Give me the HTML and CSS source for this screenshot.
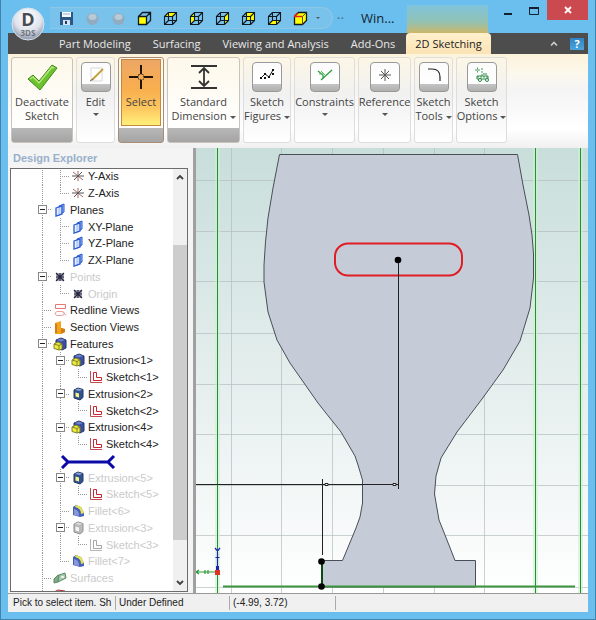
FILE: index.html
```html
<!DOCTYPE html>
<html lang="en">
<head>
    <meta charset="UTF-8">
    <meta name="viewport" content="width=device-width, initial-scale=1.0">
    <title>2D Sketching</title>
    <link rel="stylesheet" href="styles.css">
</head>
<body>
    <svg class="sprite" aria-hidden="true">
        <symbol id="wire" viewBox="0 0 15 15">
            <path d="M1.5 5.5h8v8h-8zM5.5 1.5h8v8h-8zM1.5 5.5l4-4M9.5 5.5l4-4M1.5 13.5l4-4M9.5 13.5l4-4" fill="none" stroke="#101820" stroke-width="1.1"/>
        </symbol>
        <symbol id="axis" viewBox="0 0 14 14">
            <path d="M7 2v10M2 3l10 8" stroke="#a06868" fill="none"/>
            <path d="M1 7h12M3 11l8-8" stroke="#555" fill="none"/>
        </symbol>
        <symbol id="plane" viewBox="0 0 14 14">
            <path d="M6 3l5-2v8l-5 3z" fill="#9fc0f5" stroke="#2a58d0"/>
            <path d="M3 5l6-2v8l-6 2z" fill="#dce8ff" fill-opacity=".7" stroke="#2a58d0" stroke-width="1.3"/>
        </symbol>
        <symbol id="point" viewBox="0 0 14 14">
            <path d="M3 3h8v8H3z" fill="#a9a9bb"/>
            <path d="M3 3l8 8M11 3l-8 8M7 3v8M3 7h8" stroke="#25253c" stroke-width="1.1"/>
        </symbol>
        <symbol id="redline" viewBox="0 0 14 14">
            <path d="M2.500 1.500h10v4h-10z" fill="#fff" stroke="#e87878"/>
            <path d="M4 8.500h5l2 1v2l-2 1H4l-2-1.500v-1zM10 8.500l3 4" fill="none" stroke="#e8a0a0"/>
        </symbol>
        <symbol id="section" viewBox="0 0 14 14">
            <path d="M2 3l6-2v7l4 1v3l-4 2H2z" fill="#f5a31c"/>
            <path d="M2 3l2 1v9H2zM8 8l4 1v3l-4 2z" fill="#d47c10"/>
        </symbol>
        <symbol id="solid" viewBox="0 0 14 14">
            <path d="M3 3l5-2 5 2v8l-4 2-6-2z" fill="#3c4f9c" stroke="#26356f"/>
            <path d="M4 3l4-1.500L12 3 8 4.500z" fill="#6e83cc"/>
            <path d="M1 7l4-2 4 2v5l-3 1-5-1.500z" fill="#ecec3c" stroke="#82822a"/>
            <path d="M1 7l5 1.500V13M6 8.500L9 7" fill="none" stroke="#82822a"/>
        </symbol>
        <symbol id="cut" viewBox="0 0 14 14">
            <path d="M3 3l4-2 5 1.500v8L9 13l-6-2z" fill="#33518c" stroke="#223764"/>
            <path d="M4 3l3-1.500 4 1L9 4z" fill="#87a4dc"/>
            <path d="M4.500 5.500L8 6.500v4l-3.500-1z" fill="#f4f48a"/>
        </symbol>
        <symbol id="cut-off" viewBox="0 0 14 14">
            <path d="M3 3l4-2 5 1.500v8L9 13l-6-2z" fill="#b9b9b9" stroke="#909090"/>
            <path d="M4 3l3-1.500 4 1L9 4z" fill="#ddd"/>
            <path d="M4.500 5.500L8 6.500v4l-3.500-1z" fill="#f6f6f6"/>
        </symbol>
        <symbol id="sketch" viewBox="0 0 14 14">
            <path d="M1.500 1v11.500H13" fill="none" stroke="#c44c4c"/>
            <path d="M4.500 2.500h3v5h5v3h-8z" fill="#fff" stroke="#cc2430"/>
        </symbol>
        <symbol id="sketch-off" viewBox="0 0 14 14">
            <path d="M1.500 1v11.500H13" fill="none" stroke="#b5b5b5"/>
            <path d="M4.500 2.500h3v5h5v3h-8z" fill="#fff" stroke="#a5a5a5"/>
        </symbol>
        <symbol id="fillet" viewBox="0 0 14 14">
            <path d="M2 3l3-2 5 2 3 6v3l-4 1-7-2z" fill="#4660b8"/>
            <path d="M5 1l5 2 3 6-3 1C10 6 8 4 4 3z" fill="#e6e650"/>
            <path d="M3 5c4 1 5 3 5 7l-5-1z" fill="#8698d8"/>
        </symbol>
        <symbol id="surface" viewBox="0 0 14 14">
            <path d="M1 8l4-4 3 1-3 6-4 1z" fill="#7cab84" stroke="#5c8a66"/>
            <path d="M6 4l6-2 1 5-4 2-4 2z" fill="#a5c9a9" stroke="#5c8a66"/>
            <path d="M8 5h3v2H8z" fill="#e4f0e4"/>
        </symbol>
        <symbol id="edge" viewBox="0 0 14 14">
            <path d="M1 4l4-2 7 1 1 5-6 3-5-1z" fill="#e8a0a0" stroke="#b03838"/>
            <path d="M3 5h7" stroke="#fff"/>
        </symbol>
    </svg>

    <header class="titlebar">
        <button class="orb" aria-label="Application menu">
            <svg viewBox="0 0 34 34">
                <defs>
                    <radialGradient id="orb-fill" cx=".5" cy=".3" r=".7">
                        <stop offset="0" stop-color="#fff"/>
                        <stop offset=".6" stop-color="#dfe3ec"/>
                        <stop offset="1" stop-color="#8c94a8"/>
                    </radialGradient>
                </defs>
                <circle cx="17" cy="17" r="16" fill="url(#orb-fill)" stroke="#d8e2ee"/>
                <text class="orb-letter" x="17" y="19">D</text>
                <text class="orb-name" x="17" y="29">3DS</text>
            </svg>
        </button>
        <nav class="quick" aria-label="Quick access">
            <button aria-label="Save"><svg viewBox="0 0 15 15">
                <path d="M1 1h13v13H1z" fill="#2c5688"/><path d="M3 1h9v5H3z" fill="#f4f8fc"/>
                <path d="M4 9h7v5H4z" fill="#d5e2f0"/><path d="M6 10h2v3H6z" fill="#1f3f68"/><path d="M4 3h7" stroke="#9ab4d0"/>
            </svg></button>
            <button aria-label="Undo"><svg viewBox="0 0 15 15">
                <circle cx="7.500" cy="8" r="6" fill="#91acc0"/><ellipse cx="7.500" cy="6" rx="4" ry="3" fill="#b8cad6"/>
            </svg></button>
            <button aria-label="Redo"><svg viewBox="0 0 15 15">
                <circle cx="7.500" cy="8" r="6" fill="#91acc0"/><ellipse cx="7.500" cy="6" rx="4" ry="3" fill="#b8cad6"/>
            </svg></button>
            <button aria-label="Front"><svg viewBox="0 0 15 15"><path d="M1 5h9v9H1z" fill="#ff0"/>
                <path d="M1.500 5.500h8v8h-8zM1.500 5.500l4-4h8v8l-4 4M9.500 5.500l4-4" fill="none" stroke="#101820" stroke-width="1.300"/></svg></button>
            <button aria-label="Top"><svg viewBox="0 0 15 15"><path d="M1 6l5-5h8l-4 5z" fill="#ff0"/><use href="#wire"/></svg></button>
            <button aria-label="Left"><svg viewBox="0 0 15 15"><path d="M1 6l5-5v8l-5 5z" fill="#ff0"/><use href="#wire"/></svg></button>
            <button aria-label="Right"><svg viewBox="0 0 15 15"><path d="M10 5l4-4v8l-4 5z" fill="#ff0"/><use href="#wire"/></svg></button>
            <button aria-label="Back"><svg viewBox="0 0 15 15"><path d="M5 1h9v9H5z" fill="#ff0"/><use href="#wire"/></svg></button>
            <button aria-label="Bottom"><svg viewBox="0 0 15 15"><path d="M1 14l5-5h8l-4 5z" fill="#ff0"/><use href="#wire"/></svg></button>
            <button aria-label="Isometric"><svg viewBox="0 0 15 15">
                <path d="M1.500 5.500l4-4h8v8l-4 4h-8z" fill="#ff0" stroke="#101820" stroke-width="1.300"/>
                <path d="M9.500 5.500v8M9.500 5.500l4-4" stroke="#55550a"/><path d="M1 5.500h8.500M1.500 5l3-3" stroke="#e02020" stroke-width="1.500"/>
            </svg></button>
            <button class="more" aria-label="More views"><span class="arrow"></span></button>
        </nav>
        <span class="dots">··</span>
        <h1>Win...</h1>
        <div class="context-glow"></div>
        <div class="window-buttons">
            <button aria-label="Minimize"><svg viewBox="0 0 12 12"><path d="M2 9h8" stroke="#14202c" stroke-width="2"/></svg></button>
            <button aria-label="Maximize"><svg viewBox="0 0 12 12"><path d="M1.500 3h9v6.500h-9z" fill="none" stroke="#14202c"/><path d="M1 3h10" stroke="#14202c" stroke-width="2"/></svg></button>
            <button class="close" aria-label="Close"><svg viewBox="0 0 12 12"><path d="M3 3l6 6M9 3l-6 6" stroke="#fff" stroke-width="1.800"/></svg></button>
        </div>
    </header>

    <nav class="tabs">
        <a href="#">Part Modeling</a>
        <a href="#">Surfacing</a>
        <a href="#">Viewing and Analysis</a>
        <a href="#">Add-Ons</a>
        <a href="#" class="active">2D Sketching</a>
        <div class="tabs-end">
            <button aria-label="Collapse ribbon"><svg viewBox="0 0 12 12"><path d="M3 7.500l3-3 3 3" fill="none" stroke="#ccc" stroke-width="1.600"/></svg></button>
            <button class="help" aria-label="Help">?</button>
        </div>
    </nav>

    <section class="ribbon" id="ribbon">
        <button class="tool large deactivate">
            <svg class="big-icon" viewBox="0 0 32 32">
                <path d="M2 18l5-4 6 6L26 4l5 3-17 22z" fill="#6cc22e" stroke="#3c8a16"/>
                <path d="M4 18l3-2 6 6L26 6l2 1" fill="none" stroke="#b4e67c" stroke-width="1.500"/>
            </svg>
            <span>Deactivate<br>Sketch</span>
        </button>
        <button class="tool edit">
            <span class="tile"><svg viewBox="0 0 20 18">
                <path d="M5 2h11v13H5z" fill="#fff" stroke="#d8d8d8"/><path d="M6 14L17 3" stroke="#c5a23c" stroke-width="2"/><path d="M4 15l3-2" stroke="#666"/>
            </svg></span>
            <span>Edit</span>
            <span class="arrow"></span>
        </button>
        <button class="tool large select">
            <span class="pressed">
                <svg class="big-icon" viewBox="0 0 32 32">
                    <path d="M16 4v9M16 19v9M4 16h9M19 16h9" stroke="#201408" stroke-width="2"/>
                    <path d="M13.500 13.500h5v5h-5z" fill="none" stroke="#68421c" stroke-dasharray="2 1"/>
                </svg>
                <span>Select</span>
            </span>
        </button>
        <button class="tool large dimension">
            <svg class="big-icon" viewBox="0 0 32 32">
                <path d="M3 5h26M3 27h26M16 7v18M11 12l5-5 5 5M11 20l5 5 5-5" fill="none" stroke="#333" stroke-width="1.800"/>
            </svg>
            <span>Standard<br>Dimension <i class="arrow"></i></span>
        </button>
        <button class="tool figures">
            <span class="tile"><svg viewBox="0 0 20 18">
                <path d="M4 12l4-4 4 3 4-7" fill="none" stroke="#111"/><path d="M3 11h2v2H3zM7 7h2v2H7zM11 10h2v2h-2zM15 3h2v2h-2zM15 7h2v2h-2zM7 11h2v2H7z" fill="#111"/>
            </svg></span>
            <span>Sketch<br>Figures <i class="arrow"></i></span>
        </button>
        <button class="tool constraints">
            <span class="tile"><svg viewBox="0 0 20 18">
                <path d="M6 14L17 4M3 5l5 4v4" fill="none" stroke="#279a3c" stroke-width="1.200"/><path d="M6 5l5 5M4 8h4" stroke="#4dba5e"/>
            </svg></span>
            <span>Constraints</span>
            <span class="arrow"></span>
        </button>
        <button class="tool reference">
            <span class="tile"><svg viewBox="0 0 20 18">
                <path d="M10 3v12M4 9h12M6 5l8 8M14 5l-8 8" stroke="#555"/>
            </svg></span>
            <span>Reference</span>
            <span class="arrow"></span>
        </button>
        <button class="tool sketch-tools">
            <span class="tile"><svg viewBox="0 0 20 18">
                <path d="M4 3h4M8 3q8 0 8 8M16 11v4" fill="none" stroke="#222" stroke-width="1.200"/>
            </svg></span>
            <span>Sketch<br>Tools <i class="arrow"></i></span>
        </button>
        <button class="tool options">
            <span class="tile"><svg viewBox="0 0 20 18">
                <path d="M3 4h5M5.500 1.500v6M10 2v8M5 11h12" stroke="#45a05c" stroke-dasharray="2 1"/><path d="M5 10h11v3H5zM11 8h4" fill="none" stroke="#2c8844"/><circle cx="8" cy="14" r="1.500" fill="#fff" stroke="#2c8844"/><circle cx="15" cy="14" r="1.500" fill="#fff" stroke="#2c8844"/>
            </svg></span>
            <span>Sketch<br>Options <i class="arrow"></i></span>
        </button>
    </section>

    <main class="workspace">
        <aside class="explorer">
            <h2>Design Explorer</h2>
            <div class="tree">
                <ul>
                    <li><i class="line"></i><i class="tee"></i><svg><use href="#axis"/></svg>Y-Axis</li>
                    <li><i class="line"></i><i class="elbow"></i><svg><use href="#axis"/></svg>Z-Axis</li>
                    <li><i class="tee"><b></b></i><svg><use href="#plane"/></svg>Planes</li>
                    <li><i class="line"></i><i class="tee"></i><svg><use href="#plane"/></svg>XY-Plane</li>
                    <li><i class="line"></i><i class="tee"></i><svg><use href="#plane"/></svg>YZ-Plane</li>
                    <li><i class="line"></i><i class="elbow"></i><svg><use href="#plane"/></svg>ZX-Plane</li>
                    <li class="off"><i class="tee"><b></b></i><svg><use href="#point"/></svg>Points</li>
                    <li class="off"><i class="line"></i><i class="elbow"></i><svg><use href="#point"/></svg>Origin</li>
                    <li><i class="tee"></i><svg><use href="#redline"/></svg>Redline Views</li>
                    <li><i class="tee"></i><svg><use href="#section"/></svg>Section Views</li>
                    <li><i class="tee"><b></b></i><svg><use href="#solid"/></svg>Features</li>
                    <li><i class="line"></i><i class="tee"><b></b></i><svg><use href="#solid"/></svg>Extrusion&lt;1&gt;</li>
                    <li><i class="line"></i><i class="line"></i><i class="elbow"></i><svg><use href="#sketch"/></svg>Sketch&lt;1&gt;</li>
                    <li><i class="line"></i><i class="tee"><b></b></i><svg><use href="#cut"/></svg>Extrusion&lt;2&gt;</li>
                    <li><i class="line"></i><i class="line"></i><i class="elbow"></i><svg><use href="#sketch"/></svg>Sketch&lt;2&gt;</li>
                    <li><i class="line"></i><i class="tee"><b></b></i><svg><use href="#solid"/></svg>Extrusion&lt;4&gt;</li>
                    <li><i class="line"></i><i class="line"></i><i class="elbow"></i><svg><use href="#sketch"/></svg>Sketch&lt;4&gt;</li>
                    <li><i class="line"></i><svg class="rollback" viewBox="0 0 56 16">
                        <path d="M2 3l6 6-6 6M54 3l-6 6 6 6M8 9h40" fill="none" stroke="#0a0aa8" stroke-width="3"/>
                    </svg></li>
                    <li class="off"><i class="line"></i><i class="tee"><b></b></i><svg><use href="#cut"/></svg>Extrusion&lt;5&gt;</li>
                    <li class="off"><i class="line"></i><i class="line"></i><i class="elbow"></i><svg><use href="#sketch"/></svg>Sketch&lt;5&gt;</li>
                    <li class="off"><i class="line"></i><i class="tee"></i><svg><use href="#fillet"/></svg>Fillet&lt;6&gt;</li>
                    <li class="off"><i class="line"></i><i class="tee"><b></b></i><svg><use href="#cut-off"/></svg>Extrusion&lt;3&gt;</li>
                    <li class="off"><i class="line"></i><i class="line"></i><i class="elbow"></i><svg><use href="#sketch-off"/></svg>Sketch&lt;3&gt;</li>
                    <li class="off"><i class="line"></i><i class="elbow"></i><svg><use href="#fillet"/></svg>Fillet&lt;7&gt;</li>
                    <li class="off"><i class="tee"></i><svg><use href="#surface"/></svg>Surfaces</li>
                    <li><i class="tee"></i><svg><use href="#edge"/></svg>Edges</li>
                </ul>
                <div class="scrollbar">
                    <svg viewBox="0 0 14 14"><path d="M4 9l3-3 3 3" fill="none" stroke="#404040" stroke-width="1.800"/></svg>
                    <div class="track"><div class="thumb"></div></div>
                    <svg viewBox="0 0 14 14"><path d="M4 5l3 3 3-3" fill="none" stroke="#404040" stroke-width="1.800"/></svg>
                </div>
            </div>
        </aside>

        <div class="viewport">
            <svg viewBox="196 148 392 446" preserveAspectRatio="xMinYMin slice" role="img" aria-label="Sketch view">
                <!-- grid -->
                <path class="grid" d="M231.500 148v446M281.500 148v446M332.500 148v446M383.500 148v446M434.500 148v446M484.500 148v446M196 180.500h392M196 231.500h392M196 281.500h392M196 333.500h392M196 384.500h392M196 434.500h392M196 485.500h392M196 535.500h392M196 587.500h392"/>
                <!-- reference lines -->
                <path class="ref-glow" d="M217.500 148v446M535.500 148v446M580.500 148v446"/>
                <path class="ref" d="M217.500 148v446M535.500 148v446M580.500 148v445"/>
                <!-- body -->
                <path class="solid" d="M279.500 154.500H517.500L523 185L529 215L532 235L533.500 254V278L530 308L520 341L503 370L482 399L457 432L441 458L436 476L434.500 494L439 520L445 535L455 560.500H475.500V587H322V560.500H342.500L356 528L360 517L362.500 503V480L358 465L355 456L341 432L318 403L290 363L277 340L268 312L264 282V265L265.500 242L268 218L273 188Z"/>
                <path class="base" d="M223 586.500h352"/>
                <!-- slot -->
                <rect x="335" y="243.500" width="127" height="32" rx="13" class="slot"/>
                <!-- dimension -->
                <path class="dim" d="M398.500 263v226M196 484.500h202M322.500 479v76"/>
                <path class="dim" d="M325 483.500h3v2h-3zM393 483.500h3v2h-3z" fill="#fff"/>
                <path d="M322 561v26" stroke="#0b4a12" stroke-width="2"/>
                <circle cx="398" cy="260" r="3.300"/>
                <circle cx="321.500" cy="561.500" r="3.300"/>
                <circle cx="321.500" cy="586.500" r="3.300"/>
                <!-- axis triad -->
                <path d="M217.500 570v-18M215 548l2.500 3 2.500-3M215.500 557.500h4" fill="none" stroke="#2222b8" stroke-width="1.200"/>
                <path d="M216 566h3v4h-3z" fill="#2222b8"/>
                <path d="M215 572h-18M199 570l-3 2 3 2M205 570v4M208 570v4" fill="none" stroke="#2c9a34" stroke-width="1.200"/>
                <path d="M215 570h5v5h-5z" fill="#e03020"/>
            </svg>
        </div>
    </main>

    <footer class="status">
        <span>Pick to select item. Sh</span>
        <span>Under Defined</span>
        <span>(-4.99, 3.72)</span>
    </footer>
</body>
</html>
```

FILE: styles.css
```css
* {
    box-sizing: border-box;
}

body {
    margin: 0;
    padding: 0 7px 7px;
    height: 100vh;
    display: flex;
    flex-direction: column;
    overflow: hidden;
    background: #6bbfee;
    border: 1px solid #3f84ac;
    border-top-width: 0;
    font-family: "Liberation Sans", Arial, sans-serif;
    font-size: 11px;
    color: #222;
}

button {
    margin: 0;
    padding: 0;
    border: 0;
    background: none;
    font: inherit;
    color: inherit;
}

svg {
    display: block;
}

.sprite {
    width: 0;
    height: 0;
    position: absolute;
}

.arrow {
    display: inline-block;
    border: 3px solid transparent;
    border-top-color: #555;
    border-bottom: 0;
    vertical-align: middle;
}

/* title bar */
.titlebar {
    position: relative;
    height: 33px;
    flex: none;
    display: flex;
    padding-left: 42px;
}

.orb {
    position: absolute;
    left: 3px;
    top: 7px;
    z-index: 2;
}

.orb svg {
    width: 34px;
    height: 34px;
}

.orb-letter,
.orb-name {
    font-family: "Open Sans", sans-serif;
    font-weight: bold;
    text-anchor: middle;
    fill: #4a4a50;
}

.orb-letter {
    font-size: 18px;
}

.orb-name {
    font-size: 8px;
    fill: #70747c;
}

.quick {
    display: flex;
    align-items: center;
    gap: 11px;
    height: 22px;
    margin-top: 7px;
    padding: 0 12px 0 9px;
    border: 1px solid #8fc6e6;
    border-left: 0;
    border-radius: 0 11px 11px 0;
    background: #79c2ec;
}

.quick svg {
    width: 15px;
    height: 15px;
}

.quick .more {
    margin-left: -3px;
}

.quick .arrow {
    border-width: 2px 2px 0;
    display: block;
}

.dots {
    width: 12px;
    margin: 12px 0 0 4px;
    color: #4d7890;
    font-weight: bold;
}

h1 {
    margin: 7px 0 0 12px;
    width: 46px;
    font: 13px/22px "Open Sans", sans-serif;
    color: #16242e;
}

.context-glow {
    width: 81px;
    margin-top: 5px;
    background: linear-gradient(#7fc4dc, #93c2b4 60%, #ccb768);
}

.window-buttons {
    display: flex;
    align-items: flex-start;
    margin-left: auto;
}

.window-buttons button {
    width: 26px;
    height: 22px;
    display: grid;
    place-items: center;
}

.window-buttons svg {
    width: 12px;
    height: 12px;
}

.window-buttons .close {
    width: 41px;
    height: 20px;
    background: #cb4a50;
}

/* tabs */
.tabs {
    display: flex;
    flex: none;
    height: 21px;
    padding-left: 40px;
    background: #4d4d4d;
    font: 11px/21px "Open Sans", sans-serif;
}

.tabs a {
    padding: 0 11px;
    color: #e8e8e8;
    text-decoration: none;
    white-space: nowrap;
}

.tabs .active {
    padding: 0 9px;
    color: #222;
    background: linear-gradient(#fff0cc, #fbe3b4);
    border-radius: 4px 4px 0 0;
}

.tabs-end {
    display: flex;
    align-items: center;
    gap: 10px;
    margin-left: auto;
    padding-right: 4px;
}

.tabs-end svg {
    width: 12px;
    height: 12px;
}

.help {
    width: 14px;
    height: 12px;
    background: linear-gradient(#2f84c4, #4aa4dc);
    color: #fff;
    font: bold 11px/12px "Open Sans", sans-serif;
}

/* ribbon */
.ribbon {
    display: flex;
    flex: none;
    gap: 3px;
    height: 94px;
    padding: 3px 3px 5px;
    background: linear-gradient(#fdf3da, #fcf8ee 22%, #f4f4f4 38%, #fff 80%, #f0f0f0);
    font: 11px/14px "Open Sans", sans-serif;
    color: #444;
}

.tool {
    display: flex;
    flex-direction: column;
    align-items: center;
    padding-top: 4px;
    white-space: nowrap;
    border: 1px solid #ddd;
    border-radius: 3px;
    background: linear-gradient(#fcf6e6, #f1f1f1 45%, #fff);
}

.large {
    padding-top: 3px;
    border-color: #c8c4bc;
    background: linear-gradient(#fdf8ea, #fff 70px, #b8b8b8 70px, #a4a4a4);
}

.tool .big-icon {
    width: 32px;
    height: 32px;
    margin-bottom: 2px;
}

.tile {
    width: 30px;
    height: 30px;
    margin-bottom: 3px;
    padding: 3px 4px;
    border: 1px solid #999;
    border-radius: 4px;
    background: linear-gradient(#fbfbfb, #fff 21px, #c4c4c4 21px, #b0b0b0);
}

.tile svg {
    width: 20px;
    height: 18px;
}

.tool > .arrow {
    margin-top: 4px;
}

.deactivate { width: 62px; }
.edit { width: 39px; }
.select { width: 46px; }
.dimension { width: 73px; }
.figures { width: 48px; }
.constraints { width: 61px; }
.reference { width: 53px; }
.sketch-tools { width: 39px; }
.options { width: 51px; }

.select {
    padding: 1px 2px 0;
    border-color: #a88c74;
    align-items: stretch;
}

.pressed {
    display: flex;
    flex-direction: column;
    align-items: center;
    height: 67px;
    padding-top: 1px;
    border: 1px solid #c48840;
    background: linear-gradient(#eda765, #f9ae4e 45%, #fdc860 75%, #fff07a);
}

/* explorer */
.workspace {
    display: flex;
    flex: 1;
    min-height: 0;
    background: #f0f0f0;
}

.explorer {
    width: 188px;
    flex: none;
    display: flex;
    flex-direction: column;
    padding: 0 5px 1px 2px;
    border-right: 3px solid #a0a0a0;
    background: #f4f4f4;
}

h2 {
    margin: 0;
    padding-left: 3px;
    font-size: 11px;
    line-height: 20px;
    color: #98b0ca;
}

.tree {
    display: flex;
    flex: 1;
    min-height: 0;
    overflow: hidden;
    border: 1px solid #6c6c6c;
    background: #fff;
}

.tree ul {
    display: flex;
    flex: 1;
    flex-direction: column;
    height: calc(100% + 13px);
    margin: -1px 0 0;
    padding: 0 0 0 22px;
    list-style: none;
}

.tree li {
    display: flex;
    flex: 1;
    align-items: center;
    min-height: 0;
    white-space: nowrap;
}

.tree li svg {
    width: 14px;
    height: 14px;
    margin: 0 3px 0 2px;
}

.tree li .rollback {
    width: 56px;
    height: 16px;
    margin-left: 9px;
}

.tree i {
    width: 18px;
    align-self: stretch;
    display: grid;
    place-items: center;
    background: repeating-linear-gradient(#999 0 1px, transparent 1px 2px) 9px 0 / 1px 100% no-repeat;
}

.tree .tee,
.tree .elbow {
    background:
        repeating-linear-gradient(#999 0 1px, transparent 1px 2px) 9px 0 / 1px 100% no-repeat,
        repeating-linear-gradient(90deg, #999 0 1px, transparent 1px 2px) 9px 8px / 9px 1px no-repeat;
}

.tree .elbow {
    background-size: 1px 50%, 9px 1px;
}

.tree b {
    width: 9px;
    height: 9px;
    border: 1px solid #888;
    background: linear-gradient(#222, #222) center / 5px 1px no-repeat #fff;
}

.off {
    color: #cacaca;
}

.scrollbar {
    display: flex;
    flex-direction: column;
    width: 14px;
    background: #f0f0f0;
}

.scrollbar svg {
    width: 14px;
    height: 16px;
}

.track {
    flex: 1;
    display: flex;
    flex-direction: column;
    padding: 60px 0 35px;
}

.thumb {
    flex: 1;
    background: #cdcdcd;
}

/* drawing */
.viewport {
    flex: 1;
    min-width: 0;
    overflow: hidden;
    background: linear-gradient(#c8dedb, #e9f1f0 60%, #fff);
}

.viewport svg {
    width: 100%;
    height: 100%;
}

.grid {
    stroke: #b4bebe;
    stroke-opacity: 0.7;
}

.ref {
    stroke: #2c8a3c;
}

.ref-glow {
    stroke: #c8f4cc;
    stroke-opacity: 0.6;
    stroke-width: 5;
}

.solid {
    fill: #c5ccd8;
    stroke: #4a4e56;
}

.base {
    stroke: #3c9440;
    stroke-width: 2;
}

.slot {
    fill: none;
    stroke: #e01c24;
    stroke-width: 2;
}

.dim {
    stroke: #222;
}

/* status bar */
.status {
    display: flex;
    flex: none;
    height: 19px;
    padding: 2px;
    border-top: 1px solid #999;
    background: #f0f0f0;
    font-size: 10px;
    line-height: 13px;
}

.status span {
    overflow: hidden;
    white-space: nowrap;
    padding-left: 3px;
    border-right: 1px solid #aaa;
    width: 106px;
}

.status span:nth-child(2) {
    width: 114px;
}
```
